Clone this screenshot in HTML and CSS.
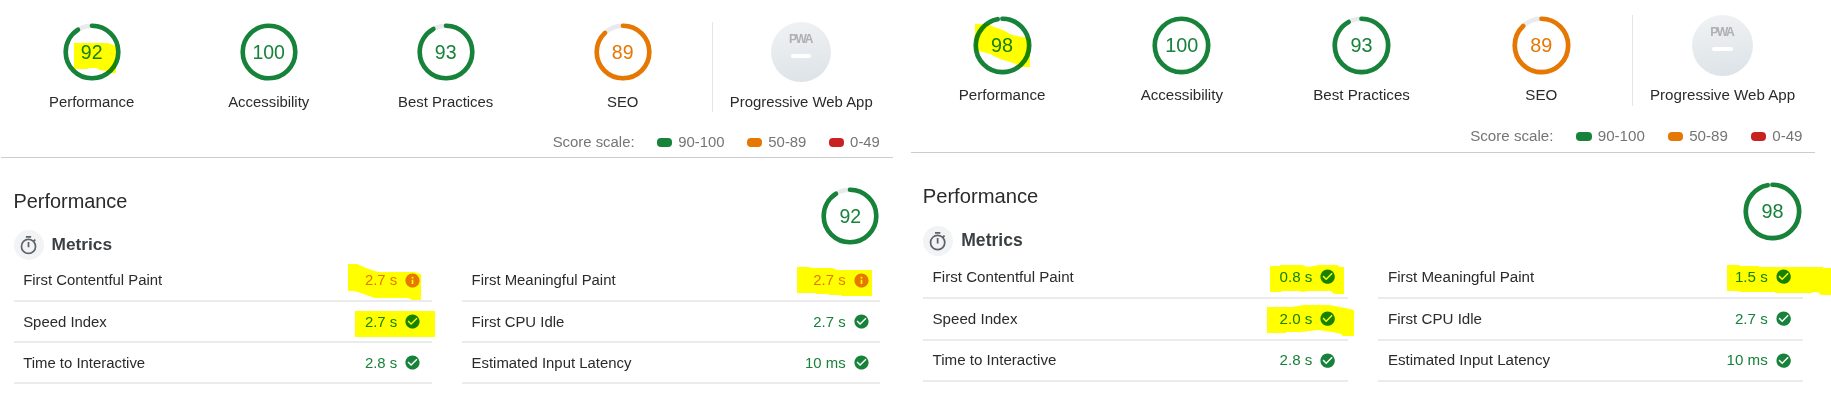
FILE: index.html
```html
<!DOCTYPE html>
<html lang="en">
<head>
<meta charset="utf-8">
<title>Lighthouse comparison</title>
<link rel="stylesheet" href="styles.css">
</head>
<body>
<svg class="defs" width="0" height="0" aria-hidden="true">
  <symbol id="pass" viewBox="0 0 24 24"><path d="M12 2C6.48 2 2 6.48 2 12s4.48 10 10 10 10-4.48 10-10S17.52 2 12 2zm-2 15l-5-5 1.41-1.41L10 14.17l7.59-7.59L19 8l-9 9z"/></symbol>
  <symbol id="info" viewBox="0 0 24 24"><path d="M12 2C6.48 2 2 6.48 2 12s4.48 10 10 10 10-4.48 10-10S17.52 2 12 2zm1.2 15h-2.4v-6h2.4v6zm0-8h-2.4V6.600h2.4V9z"/></symbol>
  <symbol id="timer" viewBox="0 0 24 24"><path d="M15 1H9v2h6V1zm-4 13h2V8h-2v6zm8.03-6.61l1.42-1.42c-.43-.51-.9-.99-1.41-1.41l-1.42 1.42A8.962 8.962 0 0 0 12 4a9 9 0 1 0 9 9 8.94 8.94 0 0 0-1.97-5.61zM12 20c-3.87 0-7-3.13-7-7s3.13-7 7-7 7 3.13 7 7-3.13 7-7 7z"/></symbol>
</svg>
<main class="compare">
  <section class="report">
    <div class="scores">
      <div class="score"><div class="gauge good"><svg viewBox="0 0 60 60"><circle class="track" cx="30" cy="30" r="26.3"/><circle class="arc" cx="30" cy="30" r="26.3" pathLength="100" stroke-dasharray="91 100"/></svg><span>92</span></div><p>Performance</p></div>
      <div class="score"><div class="gauge good"><svg viewBox="0 0 60 60"><circle class="arc" cx="30" cy="30" r="26.3"/></svg><span>100</span></div><p>Accessibility</p></div>
      <div class="score"><div class="gauge good"><svg viewBox="0 0 60 60"><circle class="track" cx="30" cy="30" r="26.3"/><circle class="arc" cx="30" cy="30" r="26.3" pathLength="100" stroke-dasharray="92 100"/></svg><span>93</span></div><p>Best Practices</p></div>
      <div class="score"><div class="gauge average"><svg viewBox="0 0 60 60"><circle class="track" cx="30" cy="30" r="26.3"/><circle class="arc" cx="30" cy="30" r="26.3" pathLength="100" stroke-dasharray="88 100"/></svg><span>89</span></div><p>SEO</p></div>
      <div class="score pwa"><div class="badge"><b>PWA</b><i></i></div><p>Progressive Web App</p></div>
    </div>
    <div class="scale"><span>Score scale:</span><span class="range good">90-100</span><span class="range average">50-89</span><span class="range poor">0-49</span></div>
    <div class="category">
      <div class="head">
        <div>
          <h2>Performance</h2>
          <h3><span class="timer"><svg><use href="#timer"/></svg></span><span class="heading">Metrics</span></h3>
        </div>
        <div class="gauge good"><svg viewBox="0 0 60 60"><circle class="track" cx="30" cy="30" r="26.3"/><circle class="arc" cx="30" cy="30" r="26.3" pathLength="100" stroke-dasharray="91 100"/></svg><span>92</span></div>
      </div>
      <div class="metrics">
        <div class="metric average"><span>First Contentful Paint</span><b>2.7 s</b><svg><use href="#info"/></svg></div>
        <div class="metric average"><span>First Meaningful Paint</span><b>2.7 s</b><svg><use href="#info"/></svg></div>
        <div class="metric good"><span>Speed Index</span><b>2.7 s</b><svg><use href="#pass"/></svg></div>
        <div class="metric good"><span>First CPU Idle</span><b>2.7 s</b><svg><use href="#pass"/></svg></div>
        <div class="metric good"><span>Time to Interactive</span><b>2.8 s</b><svg><use href="#pass"/></svg></div>
        <div class="metric good"><span>Estimated Input Latency</span><b>10 ms</b><svg><use href="#pass"/></svg></div>
      </div>
    </div>
  </section>
  <section class="report after">
    <div class="scores">
      <div class="score"><div class="gauge good"><svg viewBox="0 0 60 60"><circle class="track" cx="30" cy="30" r="26.3"/><circle class="arc" cx="30" cy="30" r="26.3" pathLength="100" stroke-dasharray="97 100"/></svg><span>98</span></div><p>Performance</p></div>
      <div class="score"><div class="gauge good"><svg viewBox="0 0 60 60"><circle class="arc" cx="30" cy="30" r="26.3"/></svg><span>100</span></div><p>Accessibility</p></div>
      <div class="score"><div class="gauge good"><svg viewBox="0 0 60 60"><circle class="track" cx="30" cy="30" r="26.3"/><circle class="arc" cx="30" cy="30" r="26.3" pathLength="100" stroke-dasharray="92 100"/></svg><span>93</span></div><p>Best Practices</p></div>
      <div class="score"><div class="gauge average"><svg viewBox="0 0 60 60"><circle class="track" cx="30" cy="30" r="26.3"/><circle class="arc" cx="30" cy="30" r="26.3" pathLength="100" stroke-dasharray="88 100"/></svg><span>89</span></div><p>SEO</p></div>
      <div class="score pwa"><div class="badge"><b>PWA</b><i></i></div><p>Progressive Web App</p></div>
    </div>
    <div class="scale"><span>Score scale:</span><span class="range good">90-100</span><span class="range average">50-89</span><span class="range poor">0-49</span></div>
    <div class="category">
      <div class="head">
        <div>
          <h2>Performance</h2>
          <h3><span class="timer"><svg><use href="#timer"/></svg></span><span class="heading">Metrics</span></h3>
        </div>
        <div class="gauge good"><svg viewBox="0 0 60 60"><circle class="track" cx="30" cy="30" r="26.3"/><circle class="arc" cx="30" cy="30" r="26.3" pathLength="100" stroke-dasharray="97 100"/></svg><span>98</span></div>
      </div>
      <div class="metrics">
        <div class="metric good"><span>First Contentful Paint</span><b>0.8 s</b><svg><use href="#pass"/></svg></div>
        <div class="metric good"><span>First Meaningful Paint</span><b>1.5 s</b><svg><use href="#pass"/></svg></div>
        <div class="metric good"><span>Speed Index</span><b>2.0 s</b><svg><use href="#pass"/></svg></div>
        <div class="metric good"><span>First CPU Idle</span><b>2.7 s</b><svg><use href="#pass"/></svg></div>
        <div class="metric good"><span>Time to Interactive</span><b>2.8 s</b><svg><use href="#pass"/></svg></div>
        <div class="metric good"><span>Estimated Input Latency</span><b>10 ms</b><svg><use href="#pass"/></svg></div>
      </div>
    </div>
  </section>
</main>
<!-- Highlighter strokes over the changed values -->
<svg class="marker" viewBox="0 0 1831 408" aria-hidden="true">
  <path d="M74 43H108L110 44L116 46V73H109L106 71L100 70L96 68H88V69H74Z"/>
  <path d="M975 24H988L994 27L1003 30L1012 35L1023 37L1030 39V67H1020L1016 64L1010 62L1000 59L990 54L975 50Z"/>
  <path d="M348 264H357L366 268L378 272H414L421 274V300H412L408 298H375L366 295L358 292L353 291H348Z"/>
  <path d="M355 311H435V337H355Z"/>
  <path d="M797 267H810L811 268H833L834 269L838 270H872V296H842L840 295H829V294H816V293H797Z"/>
  <path d="M1270 266H1280V265H1302L1308 267L1319 265H1337L1340 267H1344V294H1336L1332 293V291H1307L1303 292L1298 291H1282V292H1270Z"/>
  <path d="M1267 307H1292L1304 305H1329L1340 307L1350 309L1354 310V336H1343L1341 334L1332 332L1318 330L1310 331L1300 332H1286V333H1267Z"/>
  <path d="M1727 265H1740V266H1759V267H1823V268H1831V295H1821L1819 293L1816 292H1813V293H1775V292H1739V291H1727Z"/>
</svg>
</body>
</html>
```

FILE: styles.css
```css
* { box-sizing: border-box; }

body {
  margin: 0;
  background: #fff;
  color: #2b2b2b;
  font: 14.9px/20px "Liberation Sans", Arial, sans-serif;
  overflow: hidden;
}

p, h2, h3 { margin: 0; }

.defs { position: absolute; }

.compare {
  display: flex;
  align-items: flex-start;
  gap: 16.4px;
  height: 408px;
}

.report {
  flex: none;
  width: 892.6px;
  padding-top: 22.3px;
}

.after {
  zoom: 1.0155;
  padding-top: 14.6px;
}

.good { --tone: #178239; }
.average { --tone: #e67700; }
.poor { --tone: #c7221f; }

.scores {
  display: flex;
  height: 90px;
  padding-left: 3.2px;
}

.score {
  flex: none;
  width: 177px;
  display: flex;
  flex-direction: column;
  align-items: center;
  gap: 9.5px;
  white-space: nowrap;
}

.pwa {
  width: 177.5px;
  margin-left: 0.8px;
  border-left: 1px solid #e4e5e7;
}

.gauge {
  display: grid;
  flex: none;
  place-items: center;
  width: 60px;
  height: 60px;
  color: var(--tone);
  font-size: 19.5px;
}

.gauge > * { grid-area: 1 / 1; }

.gauge svg {
  width: 60px;
  height: 60px;
  transform: rotate(-90deg);
}

.gauge circle { fill: none; stroke-width: 4.6; }
.track { stroke: #e8eaed; }
.arc { stroke: var(--tone); stroke-linecap: round; }

.badge {
  display: flex;
  flex-direction: column;
  align-items: center;
  width: 60px;
  height: 60px;
  padding-top: 11px;
  border-radius: 50%;
  background: linear-gradient(170deg, #f1f3f4, #dbe2e7);
}

.badge b {
  font-size: 12px;
  line-height: 12px;
  letter-spacing: -1.5px;
  margin-left: -1.5px;
  color: #b0b0b0;
}

.badge i {
  width: 20px;
  height: 4px;
  margin-top: 9px;
  border-radius: 2px;
  background: #fff;
}

.scale {
  display: flex;
  justify-content: flex-end;
  align-items: center;
  gap: 22.7px;
  height: 45.7px;
  margin-left: 1px;
  padding: 15px 12.7px 0 0;
  border-bottom: 1px solid #ccc;
  color: #757575;
}

.after .scale { margin-left: 2px; }

.range {
  display: flex;
  align-items: center;
  gap: 6px;
}

.range::before {
  content: "";
  width: 15px;
  height: 9px;
  border-radius: 4px;
  background: var(--tone);
}

.category { padding: 28px 12.3px 0 13.5px; }

.head {
  display: flex;
  justify-content: space-between;
  height: 74.8px;
}

.head h2 {
  margin-top: 3px;
  font-size: 19.9px;
  font-weight: 400;
  line-height: 24px;
}

.head h3 {
  display: flex;
  align-items: center;
  gap: 8px;
  height: 30px;
  margin-top: 17.3px;
  color: #3c4043;
  font-size: 17.3px;
}

.heading { padding-bottom: 3px; }

.timer {
  display: grid;
  place-items: center;
  width: 30px;
  height: 30px;
  border-radius: 50%;
  background: #f1f3f4;
}

.timer svg {
  width: 21px;
  height: 21px;
  fill: #5f6368;
}

.metrics {
  display: grid;
  grid-template-columns: 418.4px 418.4px;
  justify-content: space-between;
}

.metric {
  display: flex;
  align-items: center;
  height: 41.2px;
  padding: 0 10.7px 0 9.7px;
  border-bottom: 2px solid #ebebeb;
}

.metric span { flex: 1; }

.metric b {
  color: var(--tone);
  font-weight: 400;
}

.metric svg {
  width: 17px;
  height: 17px;
  margin-left: 7px;
  fill: var(--tone);
}

/* Multiply keeps the marked text readable, like a real highlighter */
.marker {
  position: absolute;
  top: 0;
  left: 0;
  width: 1831px;
  height: 408px;
  fill: #ff0;
  mix-blend-mode: multiply;
  pointer-events: none;
}
```
